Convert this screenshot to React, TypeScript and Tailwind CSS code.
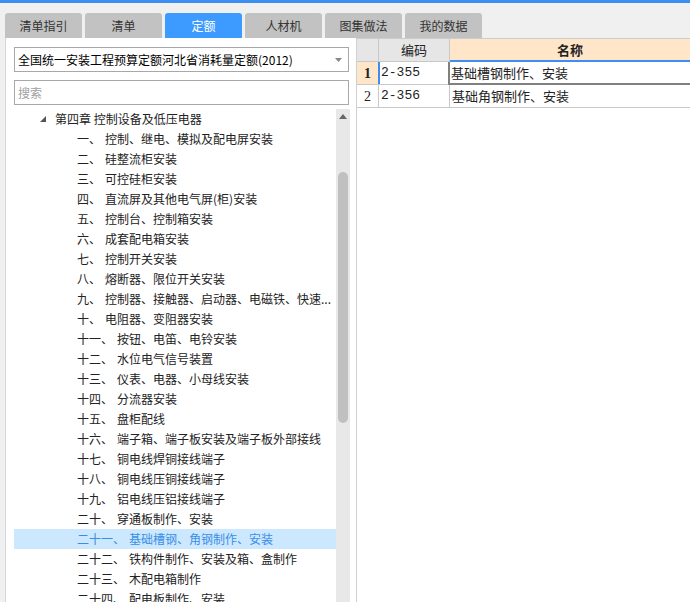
import React from "react";

const FONT = { fontFamily: '"Noto Sans CJK SC", "Noto Sans", sans-serif' };

const tabs = ["清单指引", "清单", "定额", "人材机", "图集做法", "我的数据"];

const items: [string, string][] = [
  ["一、", "控制、继电、模拟及配电屏安装"],
  ["二、", "硅整流柜安装"],
  ["三、", "可控硅柜安装"],
  ["四、", "直流屏及其他电气屏(柜)安装"],
  ["五、", "控制台、控制箱安装"],
  ["六、", "成套配电箱安装"],
  ["七、", "控制开关安装"],
  ["八、", "熔断器、限位开关安装"],
  ["九、", "控制器、接触器、启动器、电磁铁、快速..."],
  ["十、", "电阻器、变阻器安装"],
  ["十一、", "按钮、电笛、电铃安装"],
  ["十二、", "水位电气信号装置"],
  ["十三、", "仪表、电器、小母线安装"],
  ["十四、", "分流器安装"],
  ["十五、", "盘柜配线"],
  ["十六、", "端子箱、端子板安装及端子板外部接线"],
  ["十七、", "铜电线焊铜接线端子"],
  ["十八、", "铜电线压铜接线端子"],
  ["十九、", "铝电线压铝接线端子"],
  ["二十、", "穿通板制作、安装"],
  ["二十一、", "基础槽钢、角钢制作、安装"],
  ["二十二、", "铁构件制作、安装及箱、盒制作"],
  ["二十三、", "木配电箱制作"],
  ["二十四、", "配电板制作、安装"],
];

export default function App() {
  return (
    <div
      className="w-[690px] h-[602px] bg-[#f0f0f0] overflow-hidden flex flex-col text-[12px] text-[#222]"
      style={FONT}
    >
      <div className="h-[3px] bg-[#3c8ff0] shrink-0" />
      <div className="flex gap-[3px] pl-[5px] pt-[10px] shrink-0">
        {tabs.map((t, i) => (
          <div
            key={t}
            className={
              "w-[77px] h-[25px] rounded-t-[3px] flex items-center justify-center leading-none " +
              (i === 2 ? "bg-[#3d9bff] text-white" : "bg-[#c2c2c2] text-[#333]")
            }
          >
            {t}
          </div>
        ))}
      </div>
      <div className="flex flex-1 min-h-0">
        {/* Left panel */}
        <div className="ml-[5px] w-[352px] bg-white border-l border-[#d6d6d6] border-r border-r-[#d0d0d0] flex flex-col min-h-0">
          <div className="ml-[8px] mt-[9px] w-[335px] h-[25px] shrink-0 border border-[#a8a8a8] flex items-center pl-[3px] pr-[6px]">
            <span className="flex-1 text-black leading-none">全国统一安装工程预算定额河北省消耗量定额(2012)</span>
            <svg width="7" height="4" viewBox="0 0 7 4">
              <path d="M0 0H7L3.5 4Z" fill="#888" />
            </svg>
          </div>
          <div className="ml-[8px] mt-[8px] w-[335px] h-[25px] shrink-0 border border-[#a8a8a8] flex items-center pl-[3px]">
            <span className="text-[#a0a0a0] leading-none">搜索</span>
          </div>
          <div className="flex flex-1 min-h-0 mt-[4px]">
            <div className="ml-[8px] w-[322px] flex flex-col overflow-hidden">
              <div className="h-[20px] shrink-0 flex items-center">
                <svg className="ml-[26px]" width="6" height="6" viewBox="0 0 6 6">
                  <path d="M6 0V6H0Z" fill="#555" />
                </svg>
                <span className="ml-[9px] text-[#222] leading-none">第四章 控制设备及低压电器</span>
              </div>
              {items.map(([n, t], i) => {
                const sel = i === 20;
                return (
                  <div
                    key={n}
                    className={
                      "h-[20px] shrink-0 flex items-center pl-[63px] whitespace-nowrap " +
                      (sel ? "bg-[#cce8ff] text-[#3a8ee6]" : "text-[#222]")
                    }
                  >
                    <span className="leading-none shrink-0">{n}</span>
                    <span className="ml-[4px] leading-[16px] shrink-0">{t}</span>
                  </div>
                );
              })}
            </div>
            <div className="w-[14px] bg-[#e8e8e8] flex flex-col items-center">
              <svg className="mt-[5px]" width="8" height="5" viewBox="0 0 8 5">
                <path d="M4 0L8 5H0Z" fill="#666" />
              </svg>
              <div className="mt-[53px] w-[10px] h-[251px] rounded-full bg-[#c0c0c0]" />
            </div>
          </div>
        </div>
        {/* Right panel */}
        <div className="flex-1 bg-white border-t border-[#cccccc] flex flex-col">
          <div className="flex h-[23px] border-b border-[#c8c8c8]">
            <div className="w-[22px] bg-[#e6e6e6] border-r border-[#c8c8c8]" />
            <div className="w-[71px] bg-[#e6e6e6] border-r border-[#c8c8c8] flex items-center justify-center text-[13px]">
              编码
            </div>
            <div className="flex-1 bg-[#ffe6c8] border-b-2 border-[#3c8ff0] -mb-[1px] flex items-center justify-center font-bold text-[13px]">
              名称
            </div>
          </div>
          <div className="flex h-[23px] border-b border-[#c8c8c8]">
            <div
              className="w-[22px] bg-[#ffe6c8] border-r border-[#c8c8c8] flex items-center justify-center font-bold text-[14px]"
              style={{ fontFamily: '"Liberation Serif", serif' }}
            >
              1
            </div>
            <div
              className="w-[71px] border-l-2 border-l-[#3c8ff0] -ml-[1px] border-r border-[#c8c8c8] flex items-center pl-[1px] text-[13px]"
              style={{ fontFamily: '"Liberation Mono", monospace' }}
            >
              2-355
            </div>
            <div className="flex-1 border-l-2 border-l-[#808080] -ml-[1px] border-b-2 border-b-[#808080] -mb-[1px] flex items-center pl-[1px] text-[13px]">
              基础槽钢制作、安装
            </div>
          </div>
          <div className="flex h-[23px] border-b border-[#c8c8c8]">
            <div
              className="w-[22px] border-r border-[#c8c8c8] flex items-center justify-center text-[14px]"
              style={{ fontFamily: '"Liberation Serif", serif' }}
            >
              2
            </div>
            <div
              className="w-[71px] border-r border-[#c8c8c8] flex items-center pl-[2px] text-[13px]"
              style={{ fontFamily: '"Liberation Mono", monospace' }}
            >
              2-356
            </div>
            <div className="flex-1 flex items-center pl-[2px] text-[13px]">基础角钢制作、安装</div>
          </div>
        </div>
      </div>
    </div>
  );
}
